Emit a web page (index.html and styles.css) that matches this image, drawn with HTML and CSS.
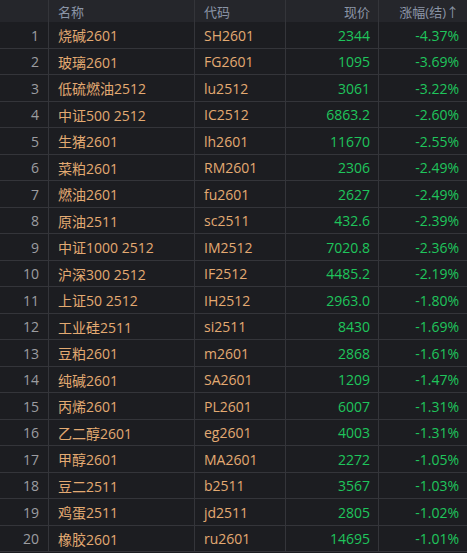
FILE: index.html
```html
<!DOCTYPE html>
<html lang="zh">
<head>
<meta charset="utf-8">
<link rel="stylesheet" href="styles.css">
</head>
<body>
<div class="grid">
  <div class="h"></div><div class="h l">名称</div><div class="h l">代码</div><div class="h r">现价</div><div class="h r">涨幅(结)↑</div>
</div>
<div class="grid rows" id="rows">
<div class="n">1</div><div class="nm">烧碱2601</div><div class="cd">SH2601</div><div class="p">2344</div><div class="c">-4.37%</div>
<div class="n">2</div><div class="nm">玻璃2601</div><div class="cd">FG2601</div><div class="p">1095</div><div class="c">-3.69%</div>
<div class="n">3</div><div class="nm">低硫燃油2512</div><div class="cd">lu2512</div><div class="p">3061</div><div class="c">-3.22%</div>
<div class="n">4</div><div class="nm">中证500 2512</div><div class="cd">IC2512</div><div class="p">6863.2</div><div class="c">-2.60%</div>
<div class="n">5</div><div class="nm">生猪2601</div><div class="cd">lh2601</div><div class="p">11670</div><div class="c">-2.55%</div>
<div class="n">6</div><div class="nm">菜粕2601</div><div class="cd">RM2601</div><div class="p">2306</div><div class="c">-2.49%</div>
<div class="n">7</div><div class="nm">燃油2601</div><div class="cd">fu2601</div><div class="p">2627</div><div class="c">-2.49%</div>
<div class="n">8</div><div class="nm">原油2511</div><div class="cd">sc2511</div><div class="p">432.6</div><div class="c">-2.39%</div>
<div class="n">9</div><div class="nm">中证1000 2512</div><div class="cd">IM2512</div><div class="p">7020.8</div><div class="c">-2.36%</div>
<div class="n">10</div><div class="nm">沪深300 2512</div><div class="cd">IF2512</div><div class="p">4485.2</div><div class="c">-2.19%</div>
<div class="n">11</div><div class="nm">上证50 2512</div><div class="cd">IH2512</div><div class="p">2963.0</div><div class="c">-1.80%</div>
<div class="n">12</div><div class="nm">工业硅2511</div><div class="cd">si2511</div><div class="p">8430</div><div class="c">-1.69%</div>
<div class="n">13</div><div class="nm">豆粕2601</div><div class="cd">m2601</div><div class="p">2868</div><div class="c">-1.61%</div>
<div class="n">14</div><div class="nm">纯碱2601</div><div class="cd">SA2601</div><div class="p">1209</div><div class="c">-1.47%</div>
<div class="n">15</div><div class="nm">丙烯2601</div><div class="cd">PL2601</div><div class="p">6007</div><div class="c">-1.31%</div>
<div class="n">16</div><div class="nm">乙二醇2601</div><div class="cd">eg2601</div><div class="p">4003</div><div class="c">-1.31%</div>
<div class="n">17</div><div class="nm">甲醇2601</div><div class="cd">MA2601</div><div class="p">2272</div><div class="c">-1.05%</div>
<div class="n">18</div><div class="nm">豆二2511</div><div class="cd">b2511</div><div class="p">3567</div><div class="c">-1.03%</div>
<div class="n">19</div><div class="nm">鸡蛋2511</div><div class="cd">jd2511</div><div class="p">2805</div><div class="c">-1.02%</div>
<div class="n">20</div><div class="nm">橡胶2601</div><div class="cd">ru2601</div><div class="p">14695</div><div class="c">-1.01%</div>
</div>
</body>
</html>
```
FILE: styles.css
```css
html, body {
  margin: 0;
  padding: 0;
  background: #1c1d21;
  width: 467px;
  height: 553px;
  overflow: hidden;
}
body {
  font-family: "Open Sans", "Noto Sans CJK SC", sans-serif;
  font-size: 14px;
}
.grid {
  display: grid;
  grid-template-columns: 49px 146px 91px 93px 88px;
}
.grid > div {
  display: flex;
  align-items: center;
  box-sizing: border-box;
  border-right: 1px solid #34353a;
  white-space: nowrap;
}
.grid > div:nth-child(5n) {
  border-right: none;
}
.h {
  height: 22px;
  background: #25262b;
  color: #8b95a7;
  font-size: 13px;
  padding: 0 9px;
}
.h.r { justify-content: flex-end; padding-right: 8px; }
.rows {
  grid-template-rows: repeat(10, 27px 26px);
}
.rows > div {
  border-bottom: 1px solid #34353a;
  padding: 0 9px;
}
.n {
  justify-content: flex-end;
  color: #9c9da1;
}
.nm, .cd {
  color: #e3aa72;
}
.p, .c {
  justify-content: flex-end;
  color: #1fc55c;
  padding-right: 8px !important;
}
```
